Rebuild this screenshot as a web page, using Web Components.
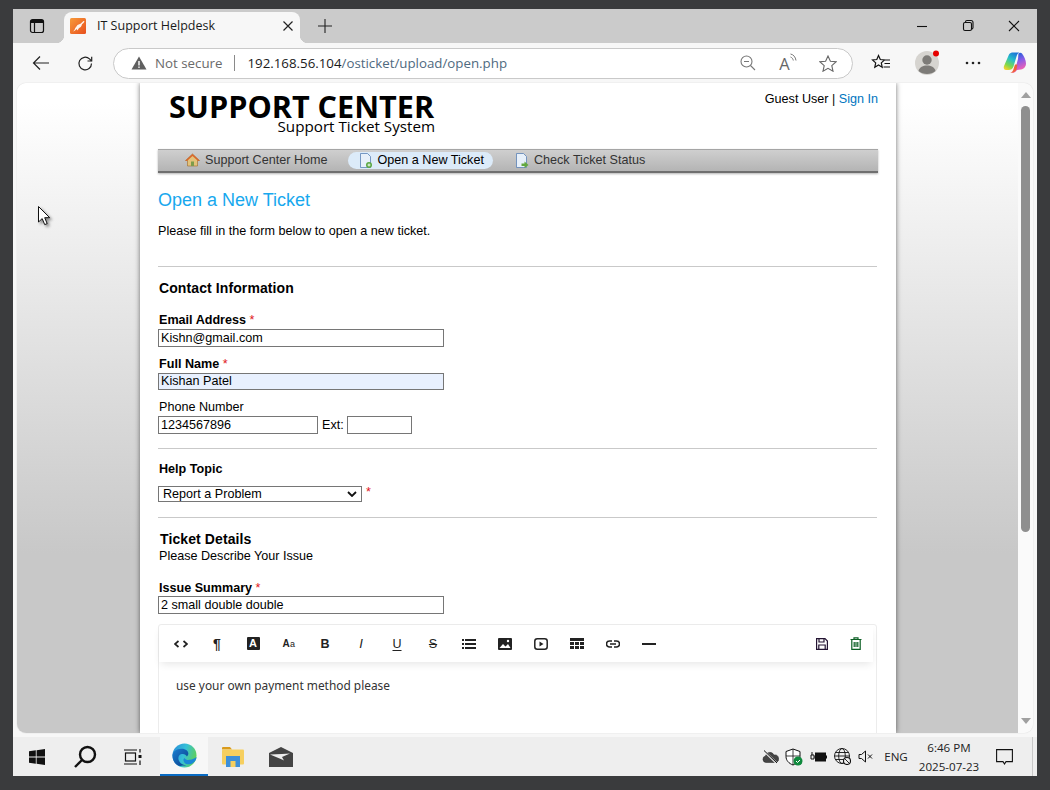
<!DOCTYPE html>
<html><head><meta charset="utf-8"><title>IT Support Helpdesk</title>
<style>
html,body{margin:0;padding:0;height:100%;background:#3a3b3d;overflow:hidden}
body{font-family:"Liberation Sans",Arial,sans-serif}
</style></head><body>
<x-window>
  <x-tabstrip></x-tabstrip>
  <x-toolbar></x-toolbar>
  <x-viewport>
    <x-ticket-page></x-ticket-page>
  </x-viewport>
  <x-taskbar></x-taskbar>
</x-window>
<script>
function def(name, css, html){
  customElements.define(name, class extends HTMLElement{
    constructor(){super();const r=this.attachShadow({mode:'open'});
      const t=document.createElement('template');
      t.innerHTML='<style>'+css+'</style>'+html;
      r.appendChild(t.content.cloneNode(true));}
  });
}

def('x-window',`:host{display:flex;flex-direction:column;box-sizing:border-box;width:1024px;height:767px;margin:9px 0 0 13px;background:#f7f7f7}`,`<slot></slot>`);

def('x-tabstrip',`
:host{display:flex;align-items:flex-end;height:34px;background:#cbcbcb;flex:none;position:relative}
.side{width:51px;height:34px;display:flex;align-items:center;justify-content:flex-start;padding-left:16px;box-sizing:border-box}
.tab{width:236px;height:31px;background:#f7f7f7;border-radius:8px 8px 0 0;display:flex;align-items:center;box-sizing:border-box;padding:0 0 3px 6px;font:12.500px "Open Sans",sans-serif;color:#1a1a1a;position:relative}
.tab::before,.tab::after{content:"";position:absolute;bottom:0;width:8px;height:8px}
.tab::before{left:-8px;background:radial-gradient(circle at 0 0,transparent 8px,#f7f7f7 8.5px)}
.tab::after{right:-8px;background:radial-gradient(circle at 100% 0,transparent 8px,#f7f7f7 8.5px)}
.title{margin-left:11px;flex:1;white-space:nowrap;padding-bottom:1px}
.x{width:16px;height:16px;margin-right:4px}
.plus{margin-left:17px;height:34px;display:flex;align-items:center}
.spacer{flex:1}
.ctl{display:flex;height:34px;align-items:center;padding-bottom:1px;box-sizing:border-box}
.ctl svg{width:46px;height:14px}
`,`
<div class="side"><svg width="16" height="16" viewBox="0 0 16 16" fill="none" stroke="#111" stroke-width="1.200"><rect x="1.500" y="1.500" width="13" height="13" rx="2"/><path d="M1.500 4.500h13M5.500 4.500v10"/><path d="M2 2h12v2.500H2z" fill="#111" stroke="none"/></svg></div>
<div class="tab">
  <svg width="16" height="16" viewBox="0 0 16 16"><defs><linearGradient id="o" x1="0" y1="0" x2="1" y2="1"><stop offset="0" stop-color="#f79a3a"/><stop offset="1" stop-color="#e8501e"/></linearGradient></defs><rect width="16" height="16" rx="1.500" fill="url(#o)"/><path d="M1.500 14c1.800-.3 3-1.800 3.600-3.800L7.500 7l3-1.300L13.500 3l1 .3-.8 1.500-1.700 1.500c-.3 2-1.500 3.200-3 3.700l-1.500 2.500-.8-1.500-2 1.700z" fill="#fff" opacity=".92"/></svg>
  <span class="title">IT Support Helpdesk</span>
  <svg class="x" viewBox="0 0 16 16" stroke="#222" stroke-width="1.200"><path d="M3.500 3.500l9 9M12.500 3.500l-9 9"/></svg>
</div>
<div class="plus"><svg width="16" height="16" viewBox="0 0 16 16" stroke="#222" stroke-width="1.100"><path d="M8 1v14M1 8h14"/></svg></div>
<div class="spacer"></div>
<div class="ctl">
 <svg viewBox="0 0 46 14" stroke="#111" fill="none" stroke-width="1.100"><path d="M18 7.500h10"/></svg>
 <svg viewBox="0 0 46 14" stroke="#111" fill="none" stroke-width="1.100"><rect x="18.500" y="3.500" width="8" height="8" rx="1.500"/><path d="M20.500 3.500v-.5a1.500 1.500 0 0 1 1.500-1.500h4a2 2 0 0 1 2 2v5a1.500 1.500 0 0 1-1.500 1.500"/></svg>
 <svg viewBox="0 0 46 14" stroke="#111" fill="none" stroke-width="1.100"><path d="M18 2l10 10M28 2L18 12"/></svg>
</div>`);

def('x-toolbar',`
:host{display:flex;align-items:center;height:39px;background:#f7f7f7;flex:none;box-sizing:border-box;padding:1px 0 0 0;font:13.300px "Open Sans",sans-serif}
.btn{display:flex;align-items:center;justify-content:center;flex:none}
.pill{width:740px;height:31px;box-sizing:border-box;border:1px solid #c9c9c9;border-radius:16px;background:#fff;display:flex;align-items:center;margin-left:10px;padding-left:17px;flex:none}
.ns{color:#6a6a6a;margin-left:8px;white-space:nowrap}
.sep{width:1px;height:16px;background:#8a8a8a;margin:0 12px}
.url{color:#4f6a80;white-space:nowrap;flex:1}
.url b{font-weight:400;color:#1a1a1a}
.r{display:flex;align-items:center}
.r>span{width:40px;display:flex;justify-content:center;align-items:center;position:relative}
.read{font:16.500px/17px "Open Sans",sans-serif;color:#666}
`,`
<div class="btn" style="width:54px;padding-left:1px;box-sizing:border-box"><svg width="18" height="16" viewBox="0 0 18 16" fill="none" stroke="#222" stroke-width="1.200"><path d="M17 8H1.500M8 1.500L1.500 8 8 14.500"/></svg></div>
<div class="btn" style="width:36px"><svg width="17" height="17" viewBox="0 0 17 17" fill="none" stroke="#222" stroke-width="1.200"><path d="M14.500 8.500a6.300 6.300 0 1 1-2-4.600L14.500 6"/><path d="M14.700 1.800V6h-4.200"/></svg></div>
<div class="pill">
 <svg width="16" height="14" viewBox="0 0 16 14"><path d="M8 .5L15.500 13.500H.5z" fill="#5f5f5f"/><rect x="7.300" y="5" width="1.400" height="4.500" fill="#fff"/><rect x="7.300" y="10.500" width="1.400" height="1.400" fill="#fff"/></svg>
 <span class="ns">Not secure</span><span class="sep"></span>
 <span class="url"><b>192.168.56.104</b>/osticket/upload/open.php</span>
 <div class="r" style="margin-right:4px">
  <span><svg width="16" height="16" viewBox="0 0 16 16" fill="none" stroke="#777" stroke-width="1.100"><circle cx="6.500" cy="6.500" r="5.500"/><path d="M4 6.500h5M10.500 10.500L15 15"/></svg></span>
  <span><span class="read" aria-hidden="true">A</span><svg width="7" height="12" viewBox="0 0 7 12" fill="none" stroke="#777" stroke-width="1" style="margin:-8px 0 0 0"><path d="M.5 4c1.500.5 2.500 1.800 2.800 3.500M.5 1c3 .6 5 3 5.500 6.500"/></svg></span>
  <span><svg width="18" height="17" viewBox="0 0 18 17" fill="none" stroke="#666" stroke-width="1.100"><path d="M9 1l2.400 5.200 5.600.6-4.200 3.800 1.200 5.600L9 13.300 4 16.200l1.200-5.600L1 6.800l5.600-.6z"/></svg></span>
 </div>
</div>
<div class="btn" style="width:56px"><svg width="20" height="18" viewBox="0 0 20 18" fill="none" stroke="#111" stroke-width="1.200"><path d="M7.500 1.500l1.800 4 4.200.5-3.200 2.900.9 4.300-3.700-2.200-3.700 2.200.9-4.300L1.500 6l4.300-.5zM14 6h5M13.500 9.500H19M12.500 13H19"/></svg></div>
<div class="btn" style="width:36px;position:relative"><svg width="26" height="26" viewBox="0 0 26 26"><circle cx="13" cy="13" r="12" fill="#d6d4d0"/><circle cx="13" cy="10" r="4.700" fill="#7d7b78"/><path d="M4.500 21c1-4 4.500-5.500 8.500-5.500s7.500 1.500 8.500 5.500c-4 4-13 4-17 0z" fill="#7d7b78"/><circle cx="22" cy="3.500" r="3" fill="#e60000"/></svg></div>
<div class="btn" style="width:56px"><svg width="16" height="4" viewBox="0 0 16 4" fill="#222"><circle cx="2" cy="2" r="1.300"/><circle cx="8" cy="2" r="1.300"/><circle cx="14" cy="2" r="1.300"/></svg></div>
<div class="btn" style="width:28px"><svg width="24" height="24" viewBox="0 0 24 24"><defs><linearGradient id="c1" x1=".7" y1="0" x2=".2" y2="1"><stop offset="0" stop-color="#1b74d8"/><stop offset=".4" stop-color="#27c0c8"/><stop offset=".75" stop-color="#7fd84a"/><stop offset="1" stop-color="#f5d12e"/></linearGradient><linearGradient id="c2" x1=".4" y1="0" x2=".7" y2="1"><stop offset="0" stop-color="#1b5fd8"/><stop offset=".4" stop-color="#8a5be8"/><stop offset=".8" stop-color="#e85fb8"/><stop offset="1" stop-color="#f0805a"/></linearGradient></defs><path d="M6 3.500C7 2 8.500 1.500 10 1.500h6.500c-1.500.5-2.500 2-3 4l-3 10c-.8 2.500-2.500 3.500-5 3.500H3C1 19 .3 17 1 15z" fill="url(#c1)"/><path d="M15.500 2.500c1-.8 2.500-1 3.500 0 2 2.500 4 7 4 10 0 3-2 5.500-5 6l-4 .5c-1 1.500-2.500 3-5 3 2-1 3-3 3.500-5l2.500-9c.3-2 .2-4 .5-5.500z" fill="url(#c2)"/><path d="M7 22c2-.5 3-2 3.700-4.500L12 13.500h2.500l-1 5c-1 2-3 3.500-6.500 3.500z" fill="#f0603a"/></svg></div>`);

def('x-viewport',`
:host{display:flex;height:650px;flex:none;margin:1px 4px 0 4px;border-radius:9px;overflow:hidden;background:#fafafa;position:relative;box-shadow:0 0 1px #bbb}
.pane{flex:1;height:650px;overflow:hidden;display:flex;justify-content:center;background:linear-gradient(#fff 20px,#c8c8c8 470px)}
.sb{width:15px;flex:none;background:#fafafa;display:flex;flex-direction:column;align-items:center;padding-top:9px;box-sizing:border-box}
.up,.down{width:0;height:0;border-left:5px solid transparent;border-right:5px solid transparent}
.up{border-bottom:6px solid #a0a0a0}.down{border-top:6px solid #a0a0a0;margin-top:186px}
.thumb{width:9px;height:426px;background:#8f8f8f;border-radius:5px;margin-top:8px}
.cursor{position:absolute;left:21px;top:123px;filter:drop-shadow(2px 2px 1.500px rgba(0,0,0,.45))}
`,`<div class="pane"><slot></slot></div><div class="sb"><div class="up"></div><div class="thumb"></div><div class="down"></div></div>
<svg class="cursor" width="13" height="20" viewBox="0 0 13 20"><path d="M.5.5v15.500l3.700-3.400 2.500 6 2.500-1-2.500-5.900h5z" fill="#fff" stroke="#111" stroke-width="1"/></svg>`);

def('x-ticket-page',`
:host{display:block;width:756px;height:650px;background:#fff;box-shadow:0 0 5px rgba(0,0,0,.55);box-sizing:border-box;padding:0 18px 0 18px;font:12.600px "Liberation Sans",sans-serif;color:#000;overflow:hidden;flex:none;margin-left:1px}
.head{display:flex;justify-content:space-between;height:66px}
.logo{padding:9px 0 0 11px;width:266px;font-family:"Open Sans",sans-serif;color:#000;box-sizing:content-box}
.logo .a{font-weight:700;font-size:30.600px;line-height:28px;white-space:nowrap}
.logo .b{font-size:15.200px;line-height:13px;text-align:right;white-space:nowrap}
.user{padding-top:9px;line-height:15px;white-space:nowrap}
.user a{color:#0075c0;text-decoration:none}
nav{height:21px;background:linear-gradient(#cfcfcf,#b4b4b4);border-top:1px solid #a5a5a5;border-bottom:2px solid #6f6f6f;box-shadow:0 1px 2px rgba(0,0,0,.3);display:flex;align-items:center;padding-left:27px;box-sizing:content-box;color:#333}
nav .i{display:flex;align-items:center;gap:5px;white-space:nowrap;height:17px;margin:-1px 20px 0 0;border-radius:9px}
nav .i.on{background:#dcebf9;color:#000;padding:0 9px 0 10px;margin-right:21px}
h1{font-size:18px;font-weight:400;color:#17a8ee;margin:17px 0 0;line-height:21px}
.intro{margin-top:13px;line-height:15px}
hr{border:0;border-top:1px solid #c9c9c9;margin:0 1px 0 0;height:0}
.h2{font-size:14px;font-weight:700;line-height:16px;letter-spacing:.1px}
.lbl{line-height:14px;padding-left:1px}
.req{color:#e0161b}
.row{display:flex;align-items:center}
`,`
<div class="head">
 <div class="logo"><div class="a">SUPPORT CENTER</div><div class="b">Support Ticket System</div></div>
 <div class="user">Guest User | <a>Sign In</a></div>
</div>
<nav>
 <div class="i"><svg width="15" height="14" viewBox="0 0 15 14"><path d="M7.500 1L.5 7.500h2V13h10V7.500h2z" fill="#e3c27a" stroke="#9c6a2a" stroke-width=".6"/><path d="M7.500 1L.5 7.500 2 8l5.500-5L13 8l1.500-.5z" fill="#d9652c"/><rect x="6" y="8.500" width="3" height="4.500" fill="#7d9c4b"/></svg>Support Center Home</div>
 <div class="i on"><svg width="15" height="15" viewBox="0 0 15 15"><path d="M2.500.5h7l3 3v11h-10z" fill="#e7f0fa" stroke="#5a82b5" stroke-width=".8"/><circle cx="11" cy="12" r="3" fill="#5ba845"/><path d="M9.500 12h3M11 10.500v3" stroke="#fff" stroke-width=".9"/></svg>Open a New Ticket</div>
 <div class="i"><svg width="15" height="15" viewBox="0 0 15 15"><path d="M2.500.5h7l3 3v11h-10z" fill="#e7f0fa" stroke="#5a82b5" stroke-width=".8"/><path d="M7.500 10.500h3V8.500l4 3.500-4 3v-2h-3z" fill="#62a83e"/></svg>Check Ticket Status</div>
</nav>
<h1>Open a New Ticket</h1>
<div class="intro">Please fill in the form below to open a new ticket.</div>
<hr style="margin-top:27px">
<div class="h2" style="margin:13px 0 0 1px">Contact Information</div>
<div class="lbl" style="margin-top:17px;font-weight:700">Email Address <span class="req" style="font-weight:400">*</span></div>
<x-box style="width:286px;margin-top:2px">Kishn@gmail.com</x-box>
<div class="lbl" style="margin-top:10px;font-weight:700">Full Name <span class="req" style="font-weight:400">*</span></div>
<x-box style="width:286px;height:17px;line-height:15px;margin-top:2px;background:#e8f0fe">Kishan Patel</x-box>
<div class="lbl" style="margin-top:10px">Phone Number</div>
<div class="row" style="margin-top:2px"><x-box style="width:160px">1234567896</x-box><span style="margin:0 3px 0 4px">Ext:</span><x-box style="width:65px"></x-box></div>
<hr style="margin-top:14px">
<div class="lbl" style="margin-top:13px;font-weight:700">Help Topic</div>
<div class="row" style="margin-top:10px"><x-select style="width:204px">Report a Problem</x-select><span class="req" style="margin:-4px 0 0 4px">*</span></div>
<hr style="margin-top:15px">
<div class="h2" style="margin:14px 0 0 2px;line-height:15px">Ticket Details</div>
<div class="lbl" style="line-height:16px;margin-top:1px">Please Describe Your Issue</div>
<div class="lbl" style="margin-top:17px;font-weight:700">Issue Summary <span class="req" style="font-weight:400">*</span></div>
<x-box style="width:286px;margin-top:1px">2 small double double</x-box>
<x-editor style="margin-top:10px">use your own payment method please</x-editor>
`);

def('x-box',`:host{display:block;box-sizing:border-box;flex:none;height:18px;border:1px solid #767676;background:#fff;padding:0 2px;font:12.600px/16px "Liberation Sans",sans-serif;color:#000;white-space:nowrap;overflow:hidden}`,
 `<slot></slot>`);
def('x-select',`:host{display:flex;align-items:center;box-sizing:border-box;height:16px;border:1px solid #767676;background:#fff;padding:0 0 0 4px;font:12.600px "Liberation Sans",sans-serif;color:#000;white-space:nowrap;flex:none}
 .s{flex:1}`,`<span class="s"><slot></slot></span><svg width="10" height="6" viewBox="0 0 10 6" fill="none" stroke="#111" stroke-width="1.800" style="margin-right:4px"><path d="M1 1l4 4 4-4"/></svg>`);

def('x-editor',`
:host{display:block;margin-right:1px;height:200px;border:1px solid #ececec;border-radius:3px;box-sizing:border-box;background:#fff;font:11.900px "Noto Sans",sans-serif;color:#333}
.bar{height:37px;display:flex;align-items:center;padding-left:4px;box-shadow:0 4px 8px -2px rgba(0,0,0,.1);margin:0 3px 0 0}
.b{width:36px;height:36px;display:flex;align-items:center;justify-content:center;flex:none;color:#222}
.sp{flex:1}
.body{padding:15px 17px;line-height:17px}
.aa{font:700 10px "Liberation Sans",sans-serif;letter-spacing:.5px}
.aa small{font-size:9px;font-weight:400}
.boxa{background:#222;color:#fff;width:13px;height:13px;text-align:center;border-radius:1px;font:700 11px/13px "Liberation Sans",sans-serif}
`,`
<div class="bar">
 <span class="b"><svg width="14" height="8" viewBox="0 0 14 8" fill="none" stroke="#222" stroke-width="1.700"><path d="M4.500 1L1 4l3.500 3M9.500 1L13 4 9.500 7"/></svg></span>
 <span class="b" style="font:700 14px 'Liberation Sans',sans-serif" aria-hidden="true">¶</span>
 <span class="b"><span class="boxa" aria-hidden="true">A</span></span>
 <span class="b" aria-hidden="true"><span class="aa">A<small>a</small></span></span>
 <span class="b" style="font:700 12.500px 'Liberation Sans',sans-serif" aria-hidden="true">B</span>
 <span class="b" style="font:italic 400 13px 'Liberation Sans',sans-serif" aria-hidden="true">I</span>
 <span class="b" style="font:400 12.500px 'Liberation Sans',sans-serif;text-decoration:underline;text-underline-offset:2px" aria-hidden="true">U</span>
 <span class="b" style="font:400 12.500px 'Liberation Sans',sans-serif;text-decoration:line-through" aria-hidden="true">S</span>
 <span class="b"><svg width="14" height="10" viewBox="0 0 14 10" fill="#222"><rect x="0" y="0" width="2" height="2"/><rect x="3" y="0" width="11" height="2"/><rect x="0" y="4" width="2" height="2"/><rect x="3" y="4" width="11" height="2"/><rect x="0" y="8" width="2" height="2"/><rect x="3" y="8" width="11" height="2"/></svg></span>
 <span class="b"><svg width="14" height="12" viewBox="0 0 14 12"><rect width="14" height="12" rx="1" fill="#222"/><path d="M1.500 10L5 6l2.500 2.500L10 6l2.500 4z" fill="#fff"/><circle cx="10" cy="3" r="1.200" fill="#fff"/></svg></span>
 <span class="b"><svg width="14" height="12" viewBox="0 0 14 12"><rect x=".8" y=".8" width="12.400" height="10.400" rx="2.500" fill="none" stroke="#222" stroke-width="1.500"/><path d="M5.500 3.500l4 2.500-4 2.500z" fill="#222"/></svg></span>
 <span class="b"><svg width="14" height="11" viewBox="0 0 14 11" fill="#222"><path d="M0 0h14v3H0zM0 4h4v3H0zM5 4h4v3H5zM10 4h4v3h-4zM0 8h4v3H0zM5 8h4v3H5zM10 8h4v3h-4z"/></svg></span>
 <span class="b"><svg width="14" height="8" viewBox="0 0 14 8" fill="none" stroke="#222" stroke-width="1.500"><path d="M6 1H3.500a3 3 0 0 0 0 6H6M8 1h2.500a3 3 0 0 1 0 6H8M4 4h6"/></svg></span>
 <span class="b"><svg width="14" height="2" viewBox="0 0 14 2"><rect width="14" height="2" fill="#222"/></svg></span>
 <span class="sp"></span>
 <span class="b" style="width:34px"><svg width="12" height="12" viewBox="0 0 12 12" fill="none" stroke="#241433" stroke-width="1.200"><path d="M.6.6h8.400l2.400 2.400v8.400H.6z"/><path d="M3 .6v3.400h5V.6M2.800 11.400V7h6.400v4.400"/></svg></span>
 <span class="b" style="width:34px"><svg width="12" height="13" viewBox="0 0 12 13" fill="none" stroke="#0c5f24" stroke-width="1.200"><path d="M.5 2.500h11M4 2.500V.8h4v1.700M1.800 2.500v9.900h8.400V2.500M4.200 5v5M6 5v5M7.800 5v5"/></svg></span>
</div>
<div class="body"><slot></slot></div>`);

def('x-taskbar',`
:host{display:flex;align-items:center;height:39px;margin-top:4px;background:#eeeeee;flex:none;font:11.600px "Open Sans",sans-serif;color:#222;position:relative;padding-right:4px}
.s{height:39px;width:48px;display:flex;align-items:center;justify-content:center;flex:none;box-sizing:border-box}
.edge{background:#f7f7f7;border-bottom:2px solid #0a6cc4;margin:0 1px 0 3px}
.sp{flex:1}
.t{display:flex;align-items:center;justify-content:center;flex:none}
.clock{width:66px;text-align:center;line-height:19px;white-space:nowrap}
.end{width:1px;height:39px;background:#c8c8c8}
`,`
<div class="s"><svg width="16" height="16" viewBox="0 0 16 16" fill="#111"><path d="M0 2.300L6.800 1.300v6.200H0zM7.600 1.200L16 0v7.500H7.600zM0 8.400h6.800v6.300L0 13.700zM7.600 8.400H16V16l-8.400-1.200z"/></svg></div>
<div class="s"><svg width="24" height="24" viewBox="0 0 24 24" fill="none" stroke="#111" stroke-width="2.400"><circle cx="14.500" cy="9.500" r="7.500"/><path d="M9 15l-7 7"/></svg></div>
<div class="s"><svg width="18" height="16" viewBox="0 0 18 16" fill="none" stroke="#111" stroke-width="1.200"><rect x="1.500" y="4" width="10" height="8"/><path d="M0 1h13M0 15h13"/><rect x="14.500" y="6" width="3" height="3" fill="#111" stroke="none"/><path d="M16 0v3.500M16 11.500V16"/></svg></div>
<div class="s edge"><svg width="25" height="25" viewBox="0 0 26 26"><defs><linearGradient id="e1" x1="0" y1=".2" x2="1" y2=".5"><stop offset="0" stop-color="#2a8fd8"/><stop offset=".5" stop-color="#35c0d8"/><stop offset="1" stop-color="#5fd05a"/></linearGradient><linearGradient id="e2" x1="0" y1="0" x2="1" y2="1"><stop offset="0" stop-color="#1a7ed0"/><stop offset="1" stop-color="#0a3f8c"/></linearGradient></defs><circle cx="13" cy="13" r="12.500" fill="url(#e1)"/><path d="M.5 13c0-3.500 4-7 9.500-7 4.500 0 7 2.500 7 5 0 1-.5 2.500-1.500 3-1-2-3-3-5.500-2.500-3 .6-4 3.500-3 6.500 1 3 4 5 8 5-1.500.5-2.500.5-4 .5C5 25.500.5 19.500.5 13z" fill="url(#e2)"/><path d="M25.500 14.500c0 3-2 5.500-5 7-3 1.300-6 .6-7.500-1-1.500-1.700-1.500-4 0-5 1 1.800 3 2.500 5.500 2 2.800-.5 5-1.500 7-3z" fill="#1a87d8"/></svg></div>
<div class="s"><svg width="22" height="20" viewBox="0 0 22 20"><path d="M0 1a1 1 0 0 1 1-1h7l2 2.500H0z" fill="#d99a1c"/><rect x="0" y="2.500" width="22" height="15" rx="1" fill="#f6cf5f"/><rect x="4" y="9" width="14" height="11" fill="#3d8fd8"/><rect x="8.500" y="14" width="5" height="6" fill="#f6cf5f"/></svg></div>
<div class="s"><svg width="24" height="20" viewBox="0 0 24 20"><path d="M12 0l12 6v14H0V6z" fill="#444"/><path d="M1 7.500l12-.5 8-.5-8 3.500 2 3.500-2-1z" fill="#eee"/></svg></div>
<div class="sp"></div>
<div class="t" style="width:24px"><svg width="17" height="14" viewBox="0 0 17 14"><path d="M4 12.500a3.300 3.300 0 0 1-.5-6.500 4.500 4.500 0 0 1 8.500-1 3.500 3.500 0 0 1 1.500 7.500z" fill="#444" stroke="#222" stroke-width=".5"/><path d="M2 1l13 12.500" stroke="#eee" stroke-width="2.200"/><path d="M2 .5l13 12.500" stroke="#111" stroke-width="1"/></svg></div>
<div class="t" style="width:24px"><svg width="18" height="18" viewBox="0 0 18 18"><path d="M8 1l7 2.500v5c0 4-3 7-7 8.500-4-1.500-7-4.500-7-8.500v-5z" fill="#fff" stroke="#111" stroke-width="1"/><path d="M8 1v16M1 8h14" stroke="#111" stroke-width=".8"/><circle cx="13" cy="13" r="4.500" fill="#108a3e"/><path d="M11 13l1.500 1.500 2.500-2.500" fill="none" stroke="#fff" stroke-width="1"/></svg></div>
<div class="t" style="width:24px"><svg width="17" height="12" viewBox="0 0 17 12"><path d="M1 4h3v4H1zM2 1v3M4 6h2" stroke="#111" fill="none" stroke-width="1"/><rect x="5.500" y="2" width="10" height="8" fill="#111" stroke="#111"/><rect x="15.500" y="4.500" width="1.500" height="3" fill="#111"/></svg></div>
<div class="t" style="width:24px"><svg width="17" height="17" viewBox="0 0 17 17" fill="none" stroke="#111" stroke-width=".9"><circle cx="8" cy="8" r="7.500"/><ellipse cx="8" cy="8" rx="3.300" ry="7.500"/><path d="M.5 8h15M1.500 4.500h13M1.500 11.500h13"/><circle cx="13" cy="13" r="3.500" fill="#eee" stroke="#111" stroke-width="1.100"/><path d="M10.700 10.700l4.600 4.600"/></svg></div>
<div class="t" style="width:22px"><svg width="15" height="13" viewBox="0 0 15 13" fill="none" stroke="#111" stroke-width="1"><path d="M1 4.500h2.500L7.500 1v11L3.500 8.500H1zM10 4.500l4 4M14 4.500l-4 4"/></svg></div>
<div class="t" style="width:40px">ENG</div>
<div class="clock"><div>6:46 PM</div><div>2025-07-23</div></div>
<div class="t" style="width:44px"><svg width="17" height="16" viewBox="0 0 17 16" fill="none" stroke="#111" stroke-width="1.100"><path d="M.6.6h15.800v12H10L8.500 15 7 12.600H.6z"/></svg></div>
<div style="flex:none;width:6px"></div>
<div class="end"></div>`);
</script>
</body></html>
